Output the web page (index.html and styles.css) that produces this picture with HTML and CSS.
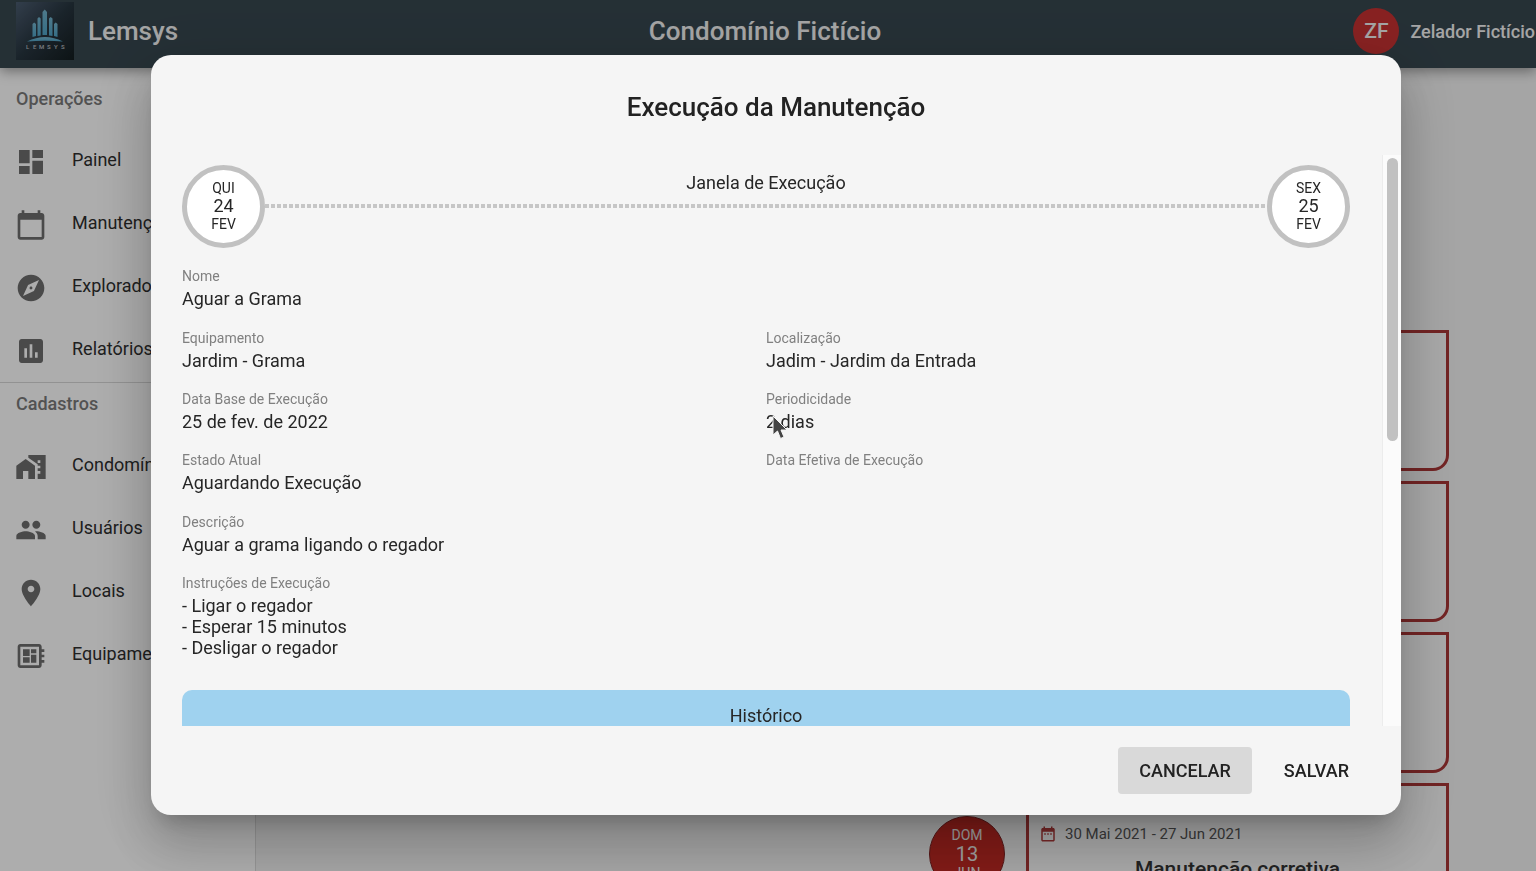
FILE: index.html
```html
<!DOCTYPE html>
<html lang="pt-BR">
<head>
<meta charset="utf-8">
<meta name="viewport" content="width=device-width, initial-scale=1">
<title>Lemsys</title>
<link rel="stylesheet" href="styles.css">
</head>
<body>
<div class="app">
  <header class="topbar">
    <div class="brand">
      <svg class="logo" viewBox="0 0 58 58" aria-hidden="true">
        <defs>
          <linearGradient id="logo-bg" x1="0" y1="0" x2="1" y2="1">
            <stop offset="0" stop-color="#4b5c70"/><stop offset=".5" stop-color="#27353f"/><stop offset="1" stop-color="#141d20"/>
          </linearGradient>
          <linearGradient id="logo-bar" x1="0" y1="0" x2="0" y2="1">
            <stop offset="0" stop-color="#74b4cd"/><stop offset="1" stop-color="#4fa3c6"/>
          </linearGradient>
        </defs>
        <rect width="58" height="58" fill="url(#logo-bg)"/>
        <g fill="url(#logo-bar)">
          <path d="M16.500 35V22l1.700-1.500L20 22v12z"/>
          <path d="M21.500 34V16.500l1.500-1.500 1.700 1.500v17z"/>
          <path d="M26.500 33V10l2.200-2.500L31 10v23z"/>
          <path d="M33 33.500V16.500l1.700-1.500 1.800 1.500V34z"/>
          <path d="M38 34V22l1.700-1.500L41.500 22v13z"/>
          <path d="M11 39.500q18-9 36 0-18-1.500-36 0z"/>
        </g>
        <text class="logo-name" y="46.500" x="10 17 23 31 38 45">LEMSYS</text>
      </svg>
      <span class="brand-name">Lemsys</span>
    </div>
    <div class="site-name">Condomínio Fictício</div>
    <div class="account"><span class="avatar">ZF</span><span>Zelador Fictício</span></div>
  </header>
  <div class="body">
    <nav class="sidebar">
      <section class="nav-group first">
        <h2>Operações</h2>
        <a href="#"><svg viewBox="0 0 24 24"><path d="M3 13h8V3H3v10zm0 8h8v-6H3v6zm10 0h8V11h-8v10zm0-18v6h8V3h-8z"/></svg><span>Painel</span></a>
        <a href="#"><svg viewBox="0 0 24 24"><path d="M20 3h-1V1h-2v2H7V1H5v2H4c-1.100 0-2 .9-2 2v16c0 1.100.9 2 2 2h16c1.100 0 2-.9 2-2V5c0-1.100-.9-2-2-2zm0 18H4V8h16v13z"/></svg><span>Manutenções</span></a>
        <a href="#"><svg viewBox="0 0 24 24"><path d="M12 10.900c-.61 0-1.100.49-1.100 1.100s.49 1.100 1.100 1.100c.61 0 1.100-.49 1.100-1.100s-.49-1.100-1.100-1.100zM12 2C6.480 2 2 6.480 2 12s4.480 10 10 10 10-4.480 10-10S17.520 2 12 2zm2.190 12.190L6 18l3.810-8.190L18 6l-3.810 8.190z"/></svg><span>Explorador</span></a>
        <a href="#"><svg viewBox="0 0 24 24"><path d="M19 3H5c-1.100 0-2 .9-2 2v14c0 1.100.9 2 2 2h14c1.100 0 2-.9 2-2V5c0-1.100-.9-2-2-2zM9 17H7v-7h2v7zm4 0h-2V7h2v10zm4 0h-2v-4h2v4z"/></svg><span>Relatórios</span></a>
      </section>
      <section class="nav-group">
        <h2>Cadastros</h2>
        <a href="#"><svg viewBox="0 0 24 24"><path d="M1 11v10h5v-6h4v6h5V11L8 6z"/><path d="M10 3v1.970l7 5V11h2v2h-2v2h2v2h-2v4h6V3H10zm9 6h-2V7h2v2z"/></svg><span>Condomínios</span></a>
        <a href="#"><svg viewBox="0 0 24 24"><path d="M16 11c1.660 0 2.990-1.340 2.990-3S17.660 5 16 5c-1.660 0-3 1.340-3 3s1.340 3 3 3zm-8 0c1.660 0 2.990-1.340 2.990-3S9.660 5 8 5C6.340 5 5 6.340 5 8s1.340 3 3 3zm0 2c-2.330 0-7 1.170-7 3.500V19h14v-2.500c0-2.330-4.670-3.500-7-3.500zm8 0c-.29 0-.62.02-.97.05 1.160.84 1.970 1.970 1.970 3.450V19h6v-2.500c0-2.330-4.670-3.500-7-3.500z"/></svg><span>Usuários</span></a>
        <a href="#"><svg viewBox="0 0 24 24"><path d="M12 2C8.130 2 5 5.130 5 9c0 5.250 7 13 7 13s7-7.750 7-13c0-3.870-3.130-7-7-7zm0 9.500c-1.380 0-2.500-1.120-2.500-2.500s1.120-2.500 2.500-2.500 2.500 1.120 2.500 2.500-1.120 2.500-2.500 2.500z"/></svg><span>Locais</span></a>
        <a href="#"><svg viewBox="0 0 24 24"><path d="M22 9V7h-2V5c0-1.100-.9-2-2-2H4c-1.100 0-2 .9-2 2v14c0 1.100.9 2 2 2h14c1.100 0 2-.9 2-2v-2h2v-2h-2v-2h2v-2h-2V9h2zm-4 10H4V5h14v14zM6 13h5v4H6zm6-6h4v3h-4zM6 7h5v5H6zm6 4h4v6h-4z"/></svg><span>Equipamentos</span></a>
      </section>
    </nav>
    <main class="timeline">
      <article class="event"><div class="card"></div></article>
      <article class="event"><div class="card"></div></article>
      <article class="event"><div class="card"></div></article>
      <article class="event">
        <div class="day"><span>DOM</span><b>13</b><span>JUN</span></div>
        <div class="card">
          <div class="period"><svg viewBox="0 0 24 24"><path d="M9 11H7v2h2v-2zm4 0h-2v2h2v-2zm4 0h-2v2h2v-2zm2-7h-1V2h-2v2H8V2H6v2H5c-1.110 0-1.990.9-1.990 2L3 20c0 1.100.89 2 2 2h14c1.100 0 2-.9 2-2V6c0-1.100-.9-2-2-2zm0 16H5V9h14v11z"/></svg>30 Mai 2021 - 27 Jun 2021</div>
          <h3>Manutenção corretiva</h3>
        </div>
      </article>
    </main>
  </div>
</div>

<div class="backdrop">
  <div class="dialog" role="dialog" aria-modal="true" aria-labelledby="dialog-title">
    <h1 id="dialog-title">Execução da Manutenção</h1>
    <div class="scroller">
      <div class="content">
        <div class="window">
          <div class="date"><span>QUI</span><b>24</b><span>FEV</span></div>
          <div class="span"><span>Janela de Execução</span><i class="dots"></i></div>
          <div class="date"><span>SEX</span><b>25</b><span>FEV</span></div>
        </div>
        <dl class="fields">
          <div><dt>Nome</dt><dd>Aguar a Grama</dd></div>
        </dl>
        <dl class="fields two">
          <div><dt>Equipamento</dt><dd>Jardim - Grama</dd></div>
          <div><dt>Localização</dt><dd>Jadim - Jardim da Entrada</dd></div>
          <div><dt>Data Base de Execução</dt><dd>25 de fev. de 2022</dd></div>
          <div><dt>Periodicidade</dt><dd class="pointed">2 dias
            <svg class="cursor" viewBox="0 0 16 26" aria-hidden="true"><path d="M1 1v19l4.500-4 3 7.500 3.500-1.500-3-7h6z"/></svg></dd></div>
          <div><dt>Estado Atual</dt><dd>Aguardando Execução</dd></div>
          <div><dt>Data Efetiva de Execução</dt><dd></dd></div>
        </dl>
        <dl class="fields">
          <div><dt>Descrição</dt><dd>Aguar a grama ligando o regador</dd></div>
          <div><dt>Instruções de Execução</dt><dd>- Ligar o regador<br>- Esperar 15 minutos<br>- Desligar o regador</dd></div>
        </dl>
        <h2 class="history">Histórico</h2>
      </div>
      <div class="track"><div class="thumb"></div></div>
    </div>
    <div class="actions">
      <button type="button" class="active">CANCELAR</button>
      <button type="button">SALVAR</button>
    </div>
  </div>
</div>
</body>
</html>
```
FILE: styles.css
```css
* { box-sizing: border-box; }
body {
  margin: 0;
  font-family: Roboto, "Liberation Sans", sans-serif;
  font-size: 18px;
  color: #262626;
}
h1, h2, h3, dl, dd { margin: 0; }
a { color: inherit; text-decoration: none; }
svg { display: block; }

.app {
  display: flex;
  flex-direction: column;
  height: 100vh;
  overflow: hidden;
  background: #f4f4f4;
}

/* top bar */
.topbar {
  display: grid;
  grid-template-columns: 1fr auto 1fr;
  align-items: center;
  flex: none;
  height: 68px;
  padding-bottom: 6px;
  background: #37474f;
  color: #f4f4f4;
  font-weight: 500;
  box-shadow: 0 3px 12px rgba(0, 0, 0, .4);
  z-index: 1;
}
.brand { display: flex; align-items: center; gap: 14px; margin-left: 16px; }
.logo { width: 58px; height: 58px; }
.logo-name { font-size: 6px; font-weight: 500; fill: #b5bcc0; }
.brand-name, .site-name { font-size: 26px; }
.site-name { margin-right: 6px; }
.account { display: flex; align-items: center; justify-content: flex-end; gap: 11px; padding-right: 1px; white-space: nowrap; }
.avatar {
  display: grid;
  place-items: center;
  width: 46px;
  height: 46px;
  border-radius: 50%;
  background: #c83232;
  font-size: 21px;
}

/* sidebar */
.body { display: flex; flex: 1; min-height: 0; }
.sidebar { width: 256px; flex: none; background: #fff; border-right: 1px solid #dcdcdc; }
.nav-group.first { padding-top: 10px; border-bottom: 1px solid #d8d8d8; }
.nav-group h2 {
  margin-bottom: 10px;
  padding-left: 16px;
  font-size: 18px;
  font-weight: 500;
  line-height: 42px;
  color: #7a7a7a;
}
.nav-group a { display: flex; align-items: center; gap: 25px; height: 63px; padding-left: 15px; color: #2e2e2e; }
.nav-group svg { width: 32px; height: 32px; fill: #6e6e6e; }
.nav-group span { padding-bottom: 4px; }

/* event cards behind the dialog */
.timeline { flex: 1; display: flex; flex-direction: column; gap: 10px; padding: 262px 87px 0 0; }
.event { display: flex; flex: none; align-items: center; justify-content: flex-end; gap: 21px; }
.card {
  width: 423px;
  height: 141px;
  padding: 36px 10px 0;
  border: 3px solid #a93636;
  border-radius: 0 0 16px 0;
  background: #f9f9f9;
}
.day {
  display: flex;
  flex-direction: column;
  align-items: center;
  justify-content: center;
  width: 76px;
  height: 76px;
  border: 1px solid #7c2020;
  border-radius: 50%;
  background: #bf2822;
  color: #ececec;
  font-size: 14px;
  line-height: 18px;
}
.day b { font-size: 20px; font-weight: 400; line-height: 20px; }
.period { display: flex; align-items: center; gap: 8px; font-size: 15px; line-height: 24px; color: #555; }
.period svg { width: 18px; height: 18px; fill: #b03a3a; }
.card h3 { padding-top: 9px; text-align: center; font-size: 21px; font-weight: 500; line-height: 28px; color: #333; }

/* dialog */
.backdrop {
  position: fixed;
  inset: 0;
  z-index: 2;
  display: flex;
  padding: 55px 135px 56px 151px;
  background: rgba(0, 0, 0, .32);
}
.dialog {
  display: flex;
  flex-direction: column;
  flex: 1;
  min-width: 0;
  border-radius: 20px;
  background: #f5f5f5;
  box-shadow: 0 14px 20px -9px rgba(0, 0, 0, .2), 0 32px 50px 4px rgba(0, 0, 0, .14), 0 12px 60px 10px rgba(0, 0, 0, .12);
}
.dialog h1 {
  flex: none;
  padding: 38px 32px 34px;
  text-align: center;
  font-size: 26px;
  font-weight: 500;
  line-height: 28px;
  color: #222;
}
.scroller { display: flex; flex: 1; min-height: 0; }
.content { flex: 1; min-width: 0; overflow: hidden; padding: 10px 32px 0 31px; }
.track { flex: none; width: 19px; padding: 3px 4px; border-left: 1px solid #ececec; background: #fbfbfb; }
.thumb { width: 11px; height: 50%; border-radius: 6px; background: #c1c1c1; }

.window { display: flex; align-items: center; }
.date {
  display: flex;
  flex-direction: column;
  align-items: center;
  justify-content: center;
  flex: none;
  width: 83px;
  height: 83px;
  padding-bottom: 2px;
  border: 5px solid #c1c1c1;
  border-radius: 50%;
  background: #fff;
  font-size: 14px;
  line-height: 18px;
}
.date b { font-size: 18px; font-weight: 400; }
.span {
  display: flex;
  flex: 1;
  flex-direction: column;
  align-items: center;
  gap: 10px;
  padding-bottom: 33px;
  line-height: 22px;
}
.dots {
  align-self: stretch;
  height: 4px;
  background: repeating-linear-gradient(90deg, #c6c6c6 0 4px, transparent 4px 6px);
}

.fields { display: grid; row-gap: 18px; margin-top: 19px; }
.window + .fields { margin-top: 18px; }
.fields.two { grid-template-columns: 1fr 1fr; }
.fields dt { margin-bottom: 2px; font-size: 14px; line-height: 20px; color: #808080; }
.fields dd { min-height: 21px; line-height: 21px; }
.pointed { position: relative; }
.cursor { position: absolute; left: 6px; top: 4px; width: 16px; height: 26px; fill: #444; stroke: #f5f5f5; stroke-width: 1; }
.history {
  margin-top: 32px;
  border-radius: 10px 10px 0 0;
  background: #9fd2ef;
  text-align: center;
  font-size: 18px;
  font-weight: 400;
  line-height: 52px;
}

.actions { display: flex; flex: none; justify-content: flex-end; gap: 11px; padding: 21px 31px; }
.actions button {
  height: 47px;
  padding: 0 21px;
  border: 0;
  border-radius: 4px;
  background: transparent;
  color: #222;
  font: 500 18px Roboto, "Liberation Sans", sans-serif;
}
.actions .active { background: #d9d9d9; }
```
